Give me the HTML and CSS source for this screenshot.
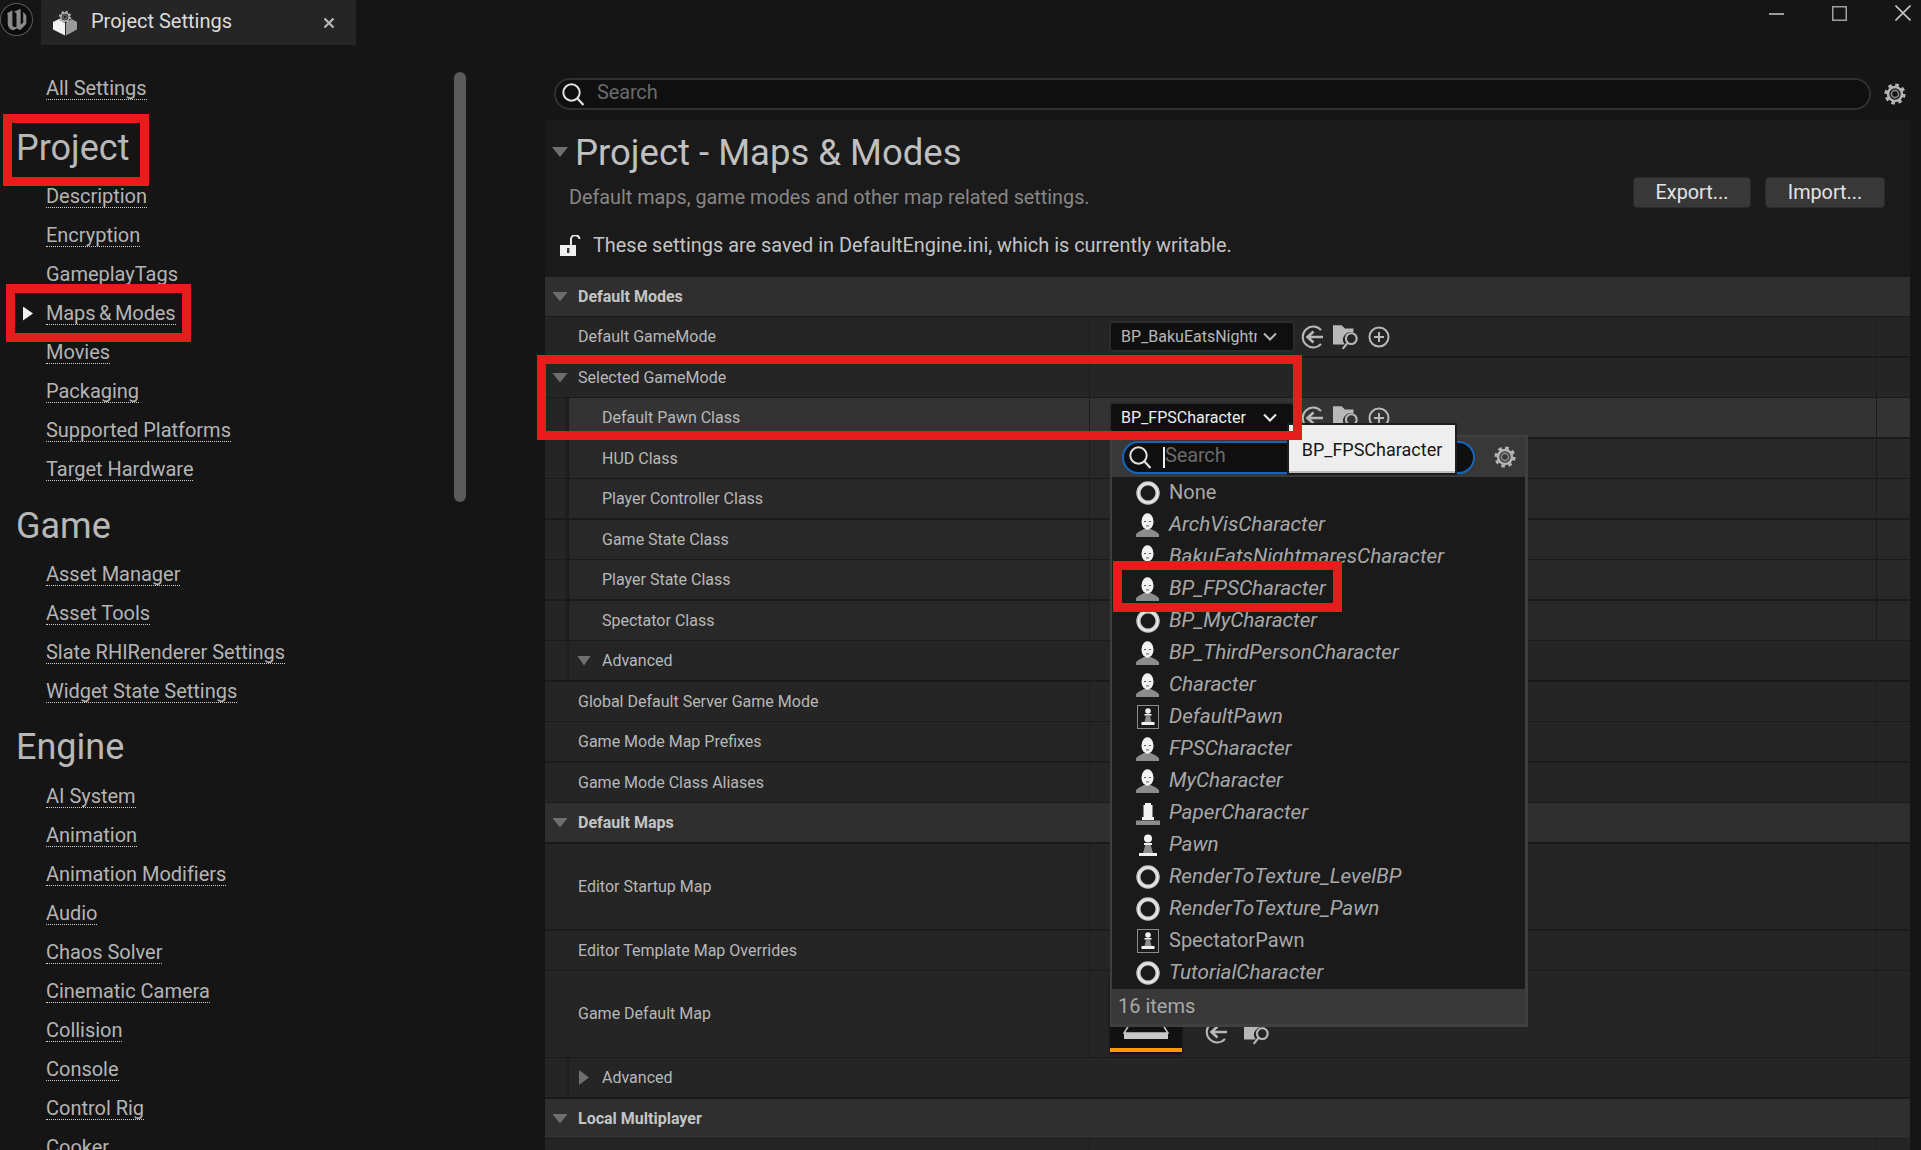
FILE: index.html
```html
<!DOCTYPE html>
<html lang="en">
<head>
<meta charset="utf-8">
<title>Project Settings</title>
<link rel="stylesheet" href="styles.css">
</head>
<body>
<svg class="sprite" width="0" height="0" aria-hidden="true">
  <defs>
    <symbol id="i-gear" viewBox="0 0 24 24">
      <circle cx="12" cy="12" r="8.6" fill="none" stroke="#b4b4b4" stroke-width="4" stroke-dasharray="3.4 3.35"/>
      <circle cx="12" cy="12" r="7" fill="none" stroke="#b4b4b4" stroke-width="2.6"/>
      <circle cx="12" cy="12" r="3.6" fill="none" stroke="#8a8a8a" stroke-width="1.6"/>
    </symbol>
    <symbol id="i-search" viewBox="0 0 24 24">
      <circle cx="10.5" cy="10.5" r="8.2" fill="none" stroke="#e0e0e0" stroke-width="2"/>
      <path d="M16.5 16.5 L22.5 23" fill="none" stroke="#e0e0e0" stroke-width="2.2"/>
    </symbol>
    <symbol id="i-back" viewBox="0 0 24 24">
      <path d="M20 5.2 A10.4 10.4 0 1 0 20 18.8" fill="none" stroke="#b8b8b8" stroke-width="2"/>
      <path d="M22 12 H7 M12.5 6.5 L6.5 12 L12.5 17.5" fill="none" stroke="#b8b8b8" stroke-width="2.6"/>
    </symbol>
    <symbol id="i-browse" viewBox="0 0 26 26">
      <path d="M0 2 H8 L11 5 H19 V9 A7 7 0 0 0 11 20 H0 Z" fill="#b8b8b8"/>
      <circle cx="17" cy="14.5" r="5" fill="none" stroke="#b8b8b8" stroke-width="2"/>
      <path d="M13.5 18.5 L9 24" fill="none" stroke="#b8b8b8" stroke-width="2"/>
    </symbol>
    <symbol id="i-plus" viewBox="0 0 24 24">
      <circle cx="12" cy="12" r="10.4" fill="none" stroke="#b8b8b8" stroke-width="2.2"/>
      <path d="M12 6.5 V17.5 M6.5 12 H17.5" fill="none" stroke="#b8b8b8" stroke-width="2.2"/>
    </symbol>
    <symbol id="i-chev" viewBox="0 0 14 10">
      <path d="M1 1.5 L7 7.5 L13 1.5" fill="none" stroke="currentColor" stroke-width="2"/>
    </symbol>
    <symbol id="i-ring" viewBox="0 0 24 24">
      <circle cx="12" cy="12" r="9.6" fill="none" stroke="#c9c9c9" stroke-width="4.2"/>
      <circle cx="12" cy="12" r="9.6" fill="none" stroke="#efefef" stroke-width="1.4"/>
    </symbol>
    <symbol id="i-char" viewBox="0 0 24 24">
      <path d="M0 24 V21.5 C1.5 18.5 5 18 8 16 H15 C18 18 21.5 18.5 23 21.5 V24 Z" fill="#8c8c8c"/>
      <ellipse cx="11.5" cy="8.5" rx="6" ry="8.3" fill="#f2f2f2"/>
      <path d="M8 8.5 H10 M13 8.5 H15 M10 13 H13" stroke="#555" stroke-width="1"/>
    </symbol>
    <symbol id="i-pawn" viewBox="0 0 24 24">
      <path d="M9 11 H15 V13 L17 20 H7 L9 13 Z" fill="#8c8c8c"/>
      <circle cx="12" cy="5.5" r="4" fill="#f2f2f2"/>
      <rect x="8" y="10" width="8" height="2" fill="#f2f2f2"/>
      <rect x="3" y="20" width="18" height="3" fill="#f2f2f2"/>
    </symbol>
    <symbol id="i-dpawn" viewBox="0 0 24 24">
      <rect x="1.5" y="0.5" width="21" height="23" fill="none" stroke="#8c8c8c" stroke-width="1"/>
      <circle cx="12" cy="6" r="2.8" fill="#f2f2f2"/>
      <rect x="8.5" y="9" width="7" height="1.6" fill="#f2f2f2"/>
      <path d="M10 10.6 H14 L15.5 17 H8.5 Z" fill="#8c8c8c"/>
      <rect x="5.5" y="17" width="13" height="3" fill="#f2f2f2"/>
    </symbol>
    <symbol id="i-paper" viewBox="0 0 24 24">
      <path d="M9 2 H15 V4 H16.5 V16 H18 V19 H6 V16 H7.5 V4 H9 Z" fill="#f2f2f2"/>
      <rect x="0" y="19.5" width="24" height="4.5" fill="#8c8c8c"/>
    </symbol>
  </defs>
</svg>

<header class="titlebar">
  <svg class="logo" viewBox="0 0 32 32" aria-hidden="true">
    <circle cx="16" cy="16" r="15.5" fill="#0c0c0c" stroke="#5a5a5a"/>
    <path d="M7 10 L12 7 V21 C12 23 14 24 16 23 V10 L13.5 8.5 L20 5.5 V21 L22.5 19 V8.5 L25.5 12 V20 L19.5 26.5 L16.5 24.5 L13 26.5 C9.5 25.5 7.5 23 7.5 20 V12 Z" fill="#8a8a8a"/>
  </svg>
  <div class="tab">
    <svg class="tab-icon" viewBox="0 0 24 26" aria-hidden="true">
      <path d="M0 12 L6 9 L12 13 V25.5 L0 19.5 Z" fill="#f4f4f4"/>
      <path d="M13 13 L18.5 9 L24 12 V19.5 L13 25.5 Z" fill="#9a9a9a"/>
      <use href="#i-gear" x="5" y="0" width="14" height="14"/>
    </svg>
    <span class="tab-title">Project Settings</span>
    <svg class="tab-close" viewBox="0 0 12 12" aria-hidden="true"><path d="M1.5 1.5 L10.5 10.5 M10.5 1.5 L1.5 10.5" stroke="#b8b8b8" stroke-width="2.2"/></svg>
  </div>
  <div class="winctl">
    <svg class="min" viewBox="0 0 15 2" aria-hidden="true"><rect width="15" height="2" fill="#9a9a9a"/></svg>
    <svg class="max" viewBox="0 0 15 15" aria-hidden="true"><rect x="0.75" y="0.75" width="13.5" height="13.5" fill="none" stroke="#a0a0a0" stroke-width="1.5"/></svg>
    <svg class="cls" viewBox="0 0 16 16" aria-hidden="true"><path d="M0.5 0.5 L15.5 15.5 M15.5 0.5 L0.5 15.5" stroke="#c4c4c4" stroke-width="1.6"/></svg>
  </div>
</header>

<div class="workspace">
  <aside class="sidebar">
    <div class="thumb-bar"></div>
    <nav class="nav">
      <div class="link"><span>All Settings</span></div>
      <h2 class="nav-head first">Project</h2>
      <div class="link"><span>Description</span></div>
      <div class="link"><span>Encryption</span></div>
      <div class="link"><span>GameplayTags</span></div>
      <div class="link"><i class="arrow"></i><span class="tight">Maps &amp; Modes</span></div>
      <div class="link"><span>Movies</span></div>
      <div class="link"><span>Packaging</span></div>
      <div class="link"><span>Supported Platforms</span></div>
      <div class="link"><span>Target Hardware</span></div>
      <h2 class="nav-head game">Game</h2>
      <div class="link"><span>Asset Manager</span></div>
      <div class="link"><span>Asset Tools</span></div>
      <div class="link"><span>Slate RHIRenderer Settings</span></div>
      <div class="link"><span>Widget State Settings</span></div>
      <h2 class="nav-head">Engine</h2>
      <div class="link"><span>AI System</span></div>
      <div class="link"><span>Animation</span></div>
      <div class="link"><span>Animation Modifiers</span></div>
      <div class="link"><span>Audio</span></div>
      <div class="link"><span>Chaos Solver</span></div>
      <div class="link"><span>Cinematic Camera</span></div>
      <div class="link"><span>Collision</span></div>
      <div class="link"><span>Console</span></div>
      <div class="link"><span>Control Rig</span></div>
      <div class="link"><span>Cooker</span></div>
    </nav>
  </aside>

  <main class="main">
    <div class="searchrow">
      <div class="search">
        <svg class="ico-search" aria-hidden="true"><use href="#i-search"/></svg>
        <span class="search-ph">Search</span>
      </div>
      <svg class="ico-gear" aria-hidden="true"><use href="#i-gear"/></svg>
    </div>

    <section class="panel">
      <div class="panel-top">
        <div class="panel-info">
          <div class="title-line"><i class="tri"></i><h1>Project - Maps &amp; Modes</h1></div>
          <p class="sub">Default maps, game modes and other map related settings.</p>
          <div class="lockline">
            <svg class="lock" viewBox="0 0 21 21" aria-hidden="true">
              <path d="M11 10 V5 A4.2 4.2 0 0 1 19.5 4" fill="none" stroke="#e8e8e8" stroke-width="2"/>
              <rect x="0" y="10" width="16" height="11" fill="#f0f0f0"/>
              <rect x="7" y="13" width="2.4" height="5" fill="#333"/>
            </svg>
            <span>These settings are saved in DefaultEngine.ini, which is currently writable.</span>
          </div>
        </div>
        <div class="actions">
          <button class="btn">Export...</button>
          <button class="btn btn-import">Import...</button>
        </div>
      </div>

      <div class="rows">
        <div class="row head"><i class="tri"></i><b>Default Modes</b></div>
        <div class="row t"><span class="name">Default GameMode</span>
          <span class="val">
            <span class="combo"><span class="combo-text">BP_BakuEatsNightmaresGameMode</span><svg class="chev"><use href="#i-chev"/></svg></span>
            <svg class="ib ib-back"><use href="#i-back"/></svg><svg class="ib ib-browse"><use href="#i-browse"/></svg><svg class="ib ib-plus"><use href="#i-plus"/></svg>
          </span><span class="ext"></span></div>
        <div class="row"><span class="name cat"><i class="tri"></i>Selected GameMode</span><span class="val"></span><span class="ext"></span></div>
        <div class="row t nest hover"><span class="name">Default Pawn Class</span>
          <span class="val">
            <span class="combo on"><span class="combo-text">BP_FPSCharacter</span><svg class="chev"><use href="#i-chev"/></svg></span>
            <svg class="ib ib-back"><use href="#i-back"/></svg><svg class="ib ib-browse"><use href="#i-browse"/></svg><svg class="ib ib-plus"><use href="#i-plus"/></svg>
          </span><span class="ext"></span></div>
        <div class="row nest"><span class="name">HUD Class</span><span class="val"></span><span class="ext"></span></div>
        <div class="row t nest"><span class="name">Player Controller Class</span><span class="val"></span><span class="ext"></span></div>
        <div class="row nest"><span class="name">Game State Class</span><span class="val"></span><span class="ext"></span></div>
        <div class="row t nest"><span class="name">Player State Class</span><span class="val"></span><span class="ext"></span></div>
        <div class="row nest"><span class="name">Spectator Class</span><span class="val"></span><span class="ext"></span></div>
        <div class="row t adv"><i class="tri small"></i>Advanced</div>
        <div class="row"><span class="name">Global Default Server Game Mode</span><span class="val"></span><span class="ext"></span></div>
        <div class="row t"><span class="name">Game Mode Map Prefixes</span><span class="val"></span><span class="ext"></span></div>
        <div class="row"><span class="name">Game Mode Class Aliases</span><span class="val"></span><span class="ext"></span></div>
        <div class="row head t"><i class="tri"></i><b>Default Maps</b></div>
        <div class="row tall t"><span class="name">Editor Startup Map</span><span class="val"></span><span class="ext"></span></div>
        <div class="row"><span class="name">Editor Template Map Overrides</span><span class="val"></span><span class="ext"></span></div>
        <div class="row tall"><span class="name raised">Game Default Map</span>
          <span class="val">
            <span class="mapthumb"><svg class="tray" viewBox="0 0 46 16" aria-hidden="true"><path d="M7 0.5 H39 L45 10 H1 Z" fill="none" stroke="#c8c8c8" stroke-width="1.5"/><rect x="1" y="10" width="44" height="6" fill="#c8c8c8"/></svg></span>
            <svg class="ib ib-back low"><use href="#i-back"/></svg><svg class="ib ib-browse low"><use href="#i-browse"/></svg>
          </span><span class="ext"></span></div>
        <div class="row t adv"><i class="tri side"></i>Advanced</div>
        <div class="row head"><i class="tri"></i><b>Local Multiplayer</b></div>
        <div class="row last"><span class="name"></span><span class="val"><span class="stub"></span></span><span class="ext"></span></div>
      </div>
    </section>
  </main>
</div>

<div class="popup">
  <div class="popup-head">
    <div class="popup-search">
      <svg class="ico-search" aria-hidden="true"><use href="#i-search"/></svg>
      <i class="caret"></i><span class="search-ph">Search</span>
    </div>
    <svg class="ico-gear" aria-hidden="true"><use href="#i-gear"/></svg>
  </div>
  <ul class="plist">
    <li class="plain"><svg><use href="#i-ring"/></svg><span>None</span></li>
    <li><svg><use href="#i-char"/></svg><span>ArchVisCharacter</span></li>
    <li><svg><use href="#i-char"/></svg><span>BakuEatsNightmaresCharacter</span></li>
    <li><svg><use href="#i-char"/></svg><span>BP_FPSCharacter</span></li>
    <li><svg><use href="#i-ring"/></svg><span>BP_MyCharacter</span></li>
    <li><svg><use href="#i-char"/></svg><span>BP_ThirdPersonCharacter</span></li>
    <li><svg><use href="#i-char"/></svg><span>Character</span></li>
    <li><svg><use href="#i-dpawn"/></svg><span>DefaultPawn</span></li>
    <li><svg><use href="#i-char"/></svg><span>FPSCharacter</span></li>
    <li><svg><use href="#i-char"/></svg><span>MyCharacter</span></li>
    <li><svg><use href="#i-paper"/></svg><span>PaperCharacter</span></li>
    <li><svg><use href="#i-pawn"/></svg><span>Pawn</span></li>
    <li><svg><use href="#i-ring"/></svg><span>RenderToTexture_LevelBP</span></li>
    <li><svg><use href="#i-ring"/></svg><span>RenderToTexture_Pawn</span></li>
    <li class="plain"><svg><use href="#i-dpawn"/></svg><span>SpectatorPawn</span></li>
    <li><svg><use href="#i-ring"/></svg><span>TutorialCharacter</span></li>
  </ul>
  <div class="popup-foot">16 items</div>
</div>

<div class="tooltip">BP_FPSCharacter</div>

<div class="mark mark-project"></div>
<div class="mark mark-maps"></div>
<div class="mark mark-selected"></div>
<div class="mark mark-item"></div>
</body>
</html>
```

FILE: styles.css
```css
* { box-sizing: border-box; }
html, body { margin: 0; height: 100%; }
body {
  position: relative;
  width: 1921px;
  height: 1150px;
  overflow: hidden;
  background: #151515;
  color: #c0c0c0;
  font-family: Roboto, "Liberation Sans", sans-serif;
  display: flex;
  flex-direction: column;
}
.sprite { position: absolute; }
i { display: block; font-style: normal; }

/* title bar */
.titlebar { height: 45px; flex: none; display: flex; align-items: flex-start; }
.logo { width: 33px; height: 33px; margin-top: 3px; flex: none; }
.tab {
  margin-left: 8px;
  width: 315px;
  height: 45px;
  background: #252525;
  display: flex;
  align-items: center;
  padding-left: 12px;
  border-radius: 3px 3px 0 0;
}
.tab-icon { width: 24px; height: 26px; flex: none; }
.tab-title { margin-left: 14px; font-size: 20px; line-height: 24px; padding-bottom: 3px; color: #dcdcdc; }
.tab-close { width: 12px; height: 12px; margin-left: auto; margin-right: 21px; margin-top: 1px; }
.winctl { margin-left: auto; display: flex; align-items: flex-start; height: 30px; }
.min { width: 15px; height: 2px; margin-top: 13px; }
.max { width: 15px; height: 15px; margin-top: 6px; margin-left: 48px; }
.cls { width: 16px; height: 16px; margin-top: 5px; margin-left: 48px; margin-right: 10px; }

/* workspace */
.workspace { flex: 1; display: flex; min-height: 0; }
.sidebar { position: relative; width: 505px; flex: none; overflow: hidden; }
.thumb-bar {
  position: absolute; left: 454px; top: 27px;
  width: 12px; height: 430px;
  background: #5a5a5a; border-radius: 6px;
}
.nav { padding: 24px 0 0 46px; }
.link { height: 39px; display: flex; align-items: center; font-size: 20px; letter-spacing: -0.02px; color: #b4b4b4; }
.link span { line-height: 22px; border-bottom: 1px dotted #d0d0d0; }
.link .tight { word-spacing: -1.2px; letter-spacing: -0.12px; }
.arrow {
  width: 10px; height: 14px; margin-left: -23px; margin-right: 13px;
  background: #f0f0f0; clip-path: polygon(0 0, 100% 50%, 0 100%);
}
.nav-head {
  margin: 0 0 0 -30px;
  height: 66px;
  line-height: 73px;
  font-size: 36px;
  font-weight: 400;
  color: #b8b8b8;
}
.nav-head.first { height: 69px; line-height: 80px; }
.nav-head.game { line-height: 75px; }

/* main */
.main { flex: 1; min-width: 0; padding-top: 33px; display: flex; flex-direction: column; border-left: 1px solid #191919; }
.searchrow { display: flex; align-items: center; padding-left: 48px; height: 32px; }
.search {
  width: 1317px; height: 32px;
  background: #0f0f0f;
  border: 2px solid #303030;
  border-radius: 16px;
  display: flex; align-items: center;
  padding-left: 5px;
}
.ico-search { width: 24px; height: 24px; flex: none; }
.search-ph { font-size: 20px; line-height: 24px; padding-bottom: 4px; color: #6a6a6a; margin-left: 12px; letter-spacing: -0.15px; }
.ico-gear { width: 24px; height: 24px; flex: none; margin-left: 12px; }
.panel { margin: 10px 11px 0 39px; background: #1a1a1a; flex: 1; min-height: 0; overflow: hidden; }
.panel-top { height: 157px; display: flex; justify-content: space-between; }
.panel-info { padding: 12px 0 0 7px; }
.title-line { display: flex; align-items: center; height: 40px; }
.title-line h1 { margin: 0 0 0 7px; font-size: 36.5px; font-weight: 400; color: #c0c0c0; white-space: nowrap; }
.tri { width: 16px; height: 10px; flex: none; background: #6e6e6e; clip-path: polygon(0 0, 100% 0, 50% 100%); }
.sub { margin: 14px 0 0 17px; font-size: 19.8px; line-height: 24px; color: #868686; }
.lockline { display: flex; align-items: center; margin: 23px 0 0 8px; height: 24px; font-size: 19.9px; color: #c4c4c4; }
.lock { width: 21px; height: 21px; margin-right: 12px; flex: none; }
.actions { display: flex; gap: 14px; padding: 57px 25px 0 0; align-items: flex-start; }
.btn {
  height: 31px; width: 118px; padding: 0;
  background: #383838; border: 1px solid #2a2a2a; border-radius: 4px;
  color: #e4e4e4; font: 19.8px Roboto, sans-serif;
}
.btn-import { width: 120px; }

/* rows */
.rows { display: flex; flex-direction: column; }
.row {
  height: 40px; flex: none;
  display: flex; align-items: stretch;
  background: #252525;
  border-bottom: 1px solid #1a1a1a;
  font-size: 16px; color: #b8b8b8;
}
.row.t { height: 41px; border-bottom-width: 2px; }
.row.tall { height: 87px; }
.row.tall.t { height: 87px; }
.row.nest { background: #282828; }
.row.hover { background: #333; }
.row.last { height: 60px; }
.name { width: 545px; flex: none; padding-left: 33px; display: flex; align-items: center; border-right: 1px solid #1c1c1c; }
.name.raised { padding-bottom: 2px; }
.name.cat { padding-left: 7px; }
.name.cat .tri { margin-right: 10px; }
.row.nest .name {
  padding-left: 57px;
  background: linear-gradient(to right, #252525 0, #252525 18px, #1b1b1b 24px, transparent 24px);
}
.val { flex: 1; min-width: 0; display: flex; align-items: center; padding-left: 19px; position: relative; }
.ext { width: 34px; flex: none; border-left: 1px solid #1c1c1c; }
.row.head { background: #2f2f2f; align-items: center; padding-left: 7px; }
.row.head .tri { margin-right: 10px; }
.row.head b { font-weight: 700; color: #c4c4c4; }
.row.adv { align-items: center; padding-left: 32px; background: linear-gradient(to right, #252525 0, #252525 20px, #1d1d1d 24px, #252525 24px); }
.tri.small { width: 14px; height: 10px; margin-right: 11px; }
.tri.side { width: 10px; height: 15px; margin: 0 13px 0 2px; clip-path: polygon(0 0, 100% 50%, 0 100%); }

.combo {
  width: 186px; height: 31px; flex: none;
  display: flex; align-items: center;
  background: #0f0f0f; border: 2px solid #2c2c2c; border-radius: 4px;
  padding-left: 10px; color: #b8b8b8;
}
.combo-text { width: 136px; overflow: hidden; white-space: nowrap; }
.chev { width: 14px; height: 10px; margin-left: 6px; color: #b8b8b8; }
.combo.on { color: #eee; }
.combo.on .chev { color: #eee; }
.ib { flex: none; }
.ib-back { width: 24px; height: 24px; margin-left: 6px; }
.ib-browse { width: 28px; height: 28px; margin-left: 8px; }
.ib-plus { width: 22px; height: 22px; margin-left: 7px; }
.ib.low { margin-top: 35px; }
.ib-back.low { margin-left: 23px; }
.ib-browse.low { margin-left: 15px; }
.mapthumb {
  width: 72px; height: 75px; flex: none; position: relative;
  margin-left: 1px;
  display: flex; justify-content: center; align-items: flex-end;
  background: #111;
  border-bottom: 4px solid #f59a00;
  padding-bottom: 9px;
  box-shadow: 0 2px 3px #0008;
}
.tray { width: 46px; height: 16px; }
.stub { width: 26px; height: 30px; margin-top: 10px; background: #0f0f0f; border: 2px solid #2c2c2c; border-radius: 4px; }

/* picker popup */
.popup {
  position: absolute; left: 1110px; top: 435px;
  width: 418px; height: 592px;
  background: #383838;
  border: 3px solid #3f3f3f;
  border-top-width: 2px;
  border-left-width: 2px;
}
.popup-head { height: 40px; display: flex; align-items: center; padding-left: 10px; background: #383838; }
.popup-search {
  width: 353px; height: 33px; flex: none;
  background: #0f0f0f;
  border: 2px solid #1565c0;
  border-radius: 17px;
  display: flex; align-items: center; padding-left: 4px;
}
.popup-search .search-ph { margin-left: 0; padding-bottom: 5px; }
.popup-search .ico-search { width: 24px; height: 24px; }
.caret { width: 2px; height: 21px; background: #eee; margin-left: 11px; }
.popup-head .ico-gear { margin-left: 18px; }
.plist { margin: 0; padding: 0; list-style: none; background: #1a1a1a; }
.plist li {
  height: 32px;
  display: flex; align-items: center;
  padding-left: 24px;
  font-size: 20.7px; font-style: italic; color: #a8a8a8;
  white-space: nowrap;
}
.plist li.plain { font-style: normal; font-size: 20px; }
.plist li span { line-height: 24px; padding-bottom: 2px; }
.plist svg { width: 24px; height: 24px; margin-right: 9px; flex: none; }
.popup-foot { height: 35px; line-height: 35px; padding-left: 6px; font-size: 20px; color: #a8a8a8; background: #383838; }

.tooltip {
  position: absolute; left: 1287px; top: 423px;
  width: 170px; height: 52px;
  display: flex; align-items: center; justify-content: center;
  background: #eee;
  border: 2px solid #1c1c1c;
  box-shadow: inset 0 -2px 0 #bdbdbd;
  color: #161616; font-size: 18px;
}

/* red annotation frames */
.mark { position: absolute; border: 9px solid #e81c1c; }
.mark-project { left: 3px; top: 114px; width: 146px; height: 72px; }
.mark-maps { left: 6px; top: 284px; width: 185px; height: 58px; }
.mark-selected { left: 537px; top: 355px; width: 765px; height: 85px; }
.mark-item { left: 1113px; top: 561px; width: 229px; height: 51px; }
```
